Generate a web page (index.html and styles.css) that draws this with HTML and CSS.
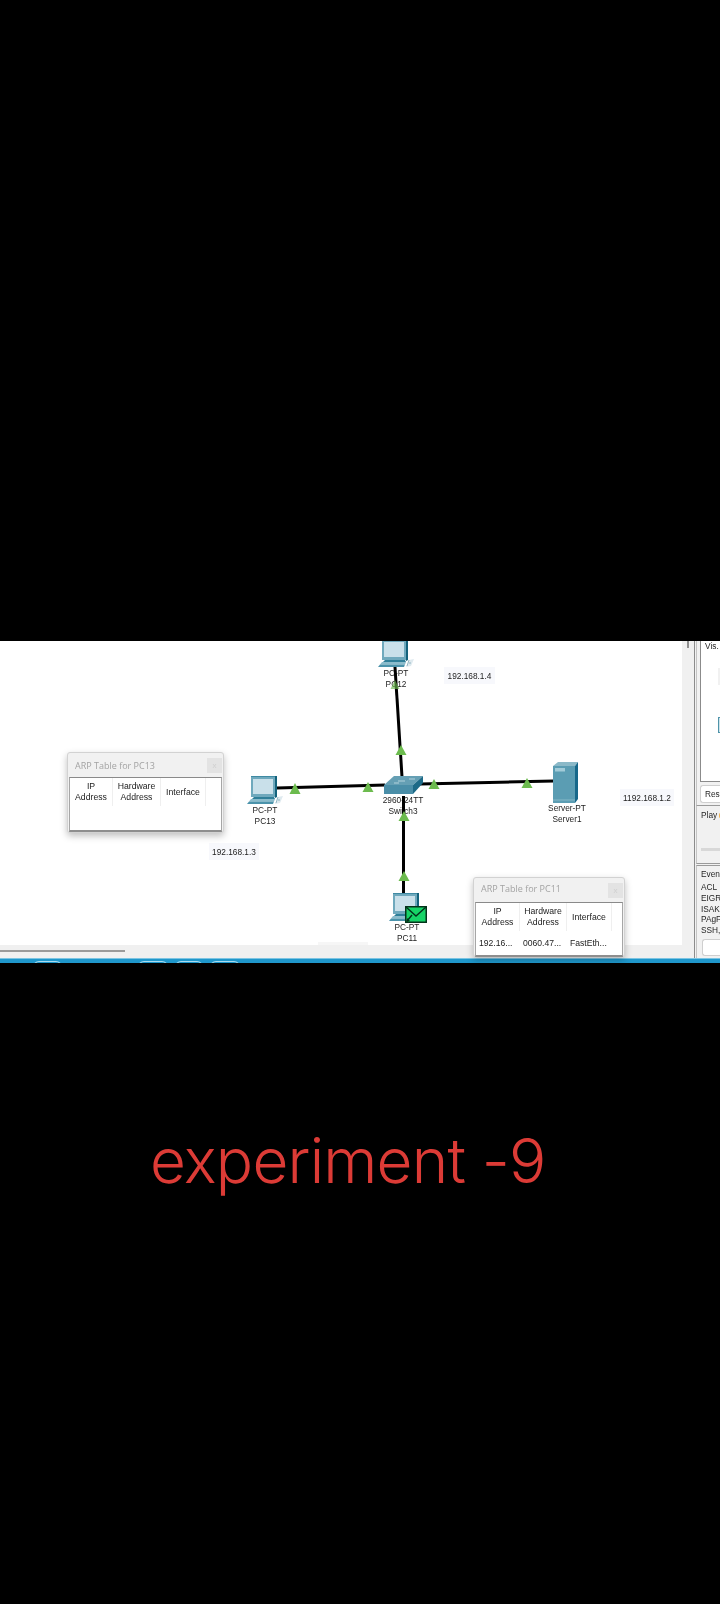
FILE: index.html
```html
<!DOCTYPE html>
<html lang="en">
<head>
<meta charset="utf-8">
<title>experiment -9</title>
<link rel="stylesheet" href="styles.css">
</head>
<body>
<svg class="defs" width="0" height="0" aria-hidden="true">
  <symbol id="pc" viewBox="0 0 36 28">
    <polygon points="4,0 30,0 30,21 4,21" fill="#3f8aa3"/>
    <polygon points="28,0 30,0 30,21 28,22" fill="#14627c"/>
    <polygon points="4,1 28,1 28,21 4,21" fill="#6fa9bd"/>
    <rect x="6" y="3" width="20" height="15" fill="#c9e0ea"/>
    <polygon points="7,21 27,21 28,23 5,23" fill="#2f7f99"/>
    <polygon points="4,23 28,23 27,25.500 2,25.500" fill="#8bbccc"/>
    <polygon points="2,25.500 27,25.500 26,28 0,28" fill="#4b93ab"/>
    <polygon points="31,21 36,20 33,27 28,28" fill="#dfeaef"/>
    <path d="M31 21L29 27M33 24L31 24" stroke="#7fa9b8" stroke-width=".8"/>
  </symbol>
</svg>

<main class="shot">
  <div class="main">
    <section class="workspace">
      <div class="canvas-row">
        <div class="canvas">
          <span class="dev dev-pc12">PC-PT<br>PC12</span>
          <span class="dev dev-pc13">PC-PT<br>PC13</span>
          <span class="dev dev-switch">2960-24TT<br>Switch3</span>
          <span class="dev dev-server">Server-PT<br>Server1</span>
          <span class="dev dev-pc11">PC-PT<br>PC11</span>

          <svg class="links" width="682" height="304" viewBox="0 0 682 304">
            <g stroke="#000" stroke-width="3" fill="none">
              <path d="M395 26L402 136"/>
              <path d="M277 147L385 144"/>
              <path d="M420 143L554 140"/>
              <path d="M403.500 155L403.500 253"/>
            </g>
            <g fill="#6cbb4e">
              <polygon points="295,142 300.500,153 289.500,153"/>
              <polygon points="368,141 373.500,151 362.500,151"/>
              <polygon points="434,138 439.500,148 428.500,148"/>
              <polygon points="527,137 532.500,147 521.500,147"/>
              <polygon points="401,104 406.500,114 395.500,114"/>
              <polygon points="404,170 409.500,180 398.500,180"/>
              <polygon points="404,230 409.500,240 398.500,240"/>
              <polygon points="395,39 399.500,48 390.500,48" opacity=".65"/>
            </g>
          </svg>

          <svg class="node node-pc12" width="36" height="28"><use href="#pc"/></svg>
          <svg class="node node-pc13" width="36" height="28"><use href="#pc"/></svg>
          <svg class="node node-pc11" width="36" height="28"><use href="#pc"/></svg>

          <svg class="node node-switch" width="40" height="19" viewBox="0 0 40 19">
            <polygon points="0,9 10,0 39,0 29,9" fill="#659fb4"/>
            <polygon points="0,9 29,9 29,18 0,18" fill="#4a8ea8"/>
            <polygon points="29,9 39,0 39,7 29,18" fill="#1d6a87"/>
            <path d="M14 5H21M25 3H31M10 7H15" stroke="#c7dfe7" stroke-width=".8"/>
          </svg>

          <svg class="node node-server" width="26" height="41" viewBox="0 0 26 41">
            <polygon points="0,4 5,0 25,0 22,4" fill="#8bb9c8"/>
            <polygon points="0,4 22,4 22,41 0,41" fill="#5b9db3"/>
            <polygon points="22,4 25,0 25,37 22,41" fill="#17688a"/>
            <rect x="2" y="6" width="10" height="3.500" fill="#a2cbd8"/>
            <path d="M0 38H22" stroke="#86b8c7" stroke-width="1"/>
          </svg>

          <svg class="node node-mail" width="22" height="17" viewBox="0 0 22 17">
            <rect x=".75" y=".75" width="20.500" height="15.500" fill="#16d467" stroke="#04331a" stroke-width="1.500"/>
            <path d="M1 1L11 10L21 1M2 15L7 9" fill="none" stroke="#03301a" stroke-width="1.400"/>
            <polygon points="1.500,16 2,12 5,15" fill="#03301a"/>
          </svg>

          <span class="ip ip-4">192.168.1.4</span>
          <span class="ip ip-2">1192.168.1.2</span>
          <span class="ip ip-3">192.168.1.3</span>

          <article class="arp arp-pc13">
            <header class="arp-title"><span>ARP Table for PC13</span><button class="arp-close">x</button></header>
            <div class="arp-body">
              <div class="arp-grid">
                <span class="arp-head">IP<br>Address</span>
                <span class="arp-head">Hardware<br>Address</span>
                <span class="arp-head">Interface</span>
              </div>
            </div>
          </article>

          <article class="arp arp-pc11">
            <header class="arp-title"><span>ARP Table for PC11</span><button class="arp-close">x</button></header>
            <div class="arp-body">
              <div class="arp-grid">
                <span class="arp-head">IP<br>Address</span>
                <span class="arp-head">Hardware<br>Address</span>
                <span class="arp-head">Interface</span>
                <span class="arp-cell">192.16...</span>
                <span class="arp-cell">0060.47...</span>
                <span class="arp-cell">FastEth...</span>
              </div>
            </div>
          </article>

          <div class="notch"></div>
        </div>
        <div class="vgutter"><div class="vthumb"></div></div>
      </div>
      <div class="hstrip"><div class="hthumb"></div></div>
    </section>

    <aside class="side">
      <section class="side-vis">
        <div class="vis-box">
          <span class="side-text">Vis.</span>
          <i class="vis-tile vis-tile-a"></i>
          <i class="vis-tile vis-tile-b"></i>
        </div>
        <div class="side-btn side-text">Res</div>
      </section>
      <section class="side-play">
        <div class="play-head"><span class="side-text">Play</span><i class="play-dot"></i></div>
        <div class="play-slider"></div>
      </section>
      <section class="side-event">
        <span class="side-text">Even</span>
        <ul class="event-list side-text">
          <li>ACL</li>
          <li>EIGR</li>
          <li>ISAK</li>
          <li>PAgP</li>
          <li>SSH,</li>
        </ul>
        <div class="event-btn"></div>
      </section>
    </aside>
  </div>

  <footer class="taskbar">
    <i class="tab tab-a"></i>
    <i class="tab tab-b"></i>
    <i class="tab tab-c"></i>
    <i class="tab tab-d"></i>
  </footer>
</main>

<p class="caption">experiment -9</p>
</body>
</html>
```

FILE: styles.css
```css
* { box-sizing: border-box; }

html, body {
  margin: 0;
  padding: 0;
  background: #000;
}

body {
  width: 720px;
  height: 1604px;
  overflow: hidden;
  padding-top: 641px;
  font-family: "Liberation Sans", Arial, sans-serif;
}

.defs { position: absolute; }

.shot {
  width: 720px;
  height: 322px;
  display: flex;
  flex-direction: column;
  overflow: hidden;
  background: #fff;
  filter: blur(.35px);
}

.main {
  flex: 1;
  min-height: 0;
  display: flex;
}

.workspace {
  width: 694px;
  display: flex;
  flex-direction: column;
}

.canvas-row {
  height: 304px;
  display: flex;
}

.canvas {
  position: relative;
  z-index: 1;
  width: 682px;
  background: #fff;
}

.vgutter {
  flex: 1;
  background: #f0f0f0;
  display: flex;
  justify-content: center;
  padding-right: 1px;
}

.vthumb {
  width: 2px;
  height: 7px;
  background: #8f8f8f;
}

.hstrip {
  flex: 1;
  background: #f0f0f0;
  padding-top: 5px;
}

.hthumb {
  width: 125px;
  height: 2px;
  background: #9a9a9a;
}

.notch {
  position: absolute;
  left: 318px;
  top: 301px;
  width: 50px;
  height: 3px;
  background: #f6f6f6;
}

/* diagram */
.links {
  position: absolute;
  left: 0;
  top: 0;
}

.node { position: absolute; overflow: visible; }
.node-pc12 { left: 378px; top: -2px; }
.node-pc13 { left: 247px; top: 135px; }
.node-pc11 { left: 389px; top: 252px; }
.node-switch { left: 384px; top: 135px; }
.node-server { left: 553px; top: 121px; }
.node-mail { left: 405px; top: 265px; }

.dev {
  position: absolute;
  width: 70px;
  text-align: center;
  font-size: 8.300px;
  line-height: 11px;
  color: #222;
}
.dev-pc12 { left: 361px; top: 27px; }
.dev-pc13 { left: 230px; top: 164px; }
.dev-switch { left: 368px; top: 154px; }
.dev-server { left: 532px; top: 162px; }
.dev-pc11 { left: 372px; top: 281px; }

.ip {
  position: absolute;
  height: 17px;
  padding: 0 3.500px;
  display: flex;
  align-items: center;
  justify-content: center;
  font-size: 8.300px;
  color: #1c1c1c;
  background: #f7f8fc;
}
.ip-4 { left: 444px; top: 26px; width: 51px; }
.ip-2 { left: 620px; top: 148px; width: 54px; }
.ip-3 { left: 209px; top: 202px; width: 50px; }

/* ARP windows */
.arp {
  position: absolute;
  display: flex;
  flex-direction: column;
  background: #f1f1f1;
  border: 1px solid #d2d2d2;
  border-radius: 3px;
  box-shadow: 0 3px 7px rgba(0, 0, 0, .25);
}
.arp-pc13 { left: 67px; top: 111px; width: 157px; height: 81px; }
.arp-pc11 { left: 473px; top: 236px; width: 152px; height: 80px; }
.arp-pc11 .arp-title span { margin-bottom: 3px; }

.arp-title {
  height: 24px;
  flex: none;
  display: flex;
  align-items: center;
  justify-content: space-between;
  padding: 0 1px 0 7px;
  font-family: "Open Sans", sans-serif;
  font-size: 9px;
  color: #a3a3a3;
}

.arp-close {
  width: 15px;
  height: 15px;
  padding: 0;
  border: 0;
  background: #e3e3e3;
  color: #cfcfcf;
  font-size: 8px;
  line-height: 15px;
  font-family: "Liberation Sans", sans-serif;
}

.arp-body {
  flex: 1;
  background: #fff;
  border: 1px solid #a6a6a6;
  border-top-color: #8a8a8a;
  border-bottom-color: #8e8e8e;
  border-width: 1px 1px 2px;
  margin: 0 1px 0 1px;
}

.arp-grid { display: grid; }
.arp-pc13 .arp-grid { grid-template-columns: 43px 48px 45px; grid-template-rows: 28px; }
.arp-pc11 .arp-grid { grid-template-columns: 44px 47px 45px; grid-template-rows: 28px 24px; }

.arp-head {
  display: flex;
  align-items: center;
  justify-content: center;
  text-align: center;
  font-size: 8.700px;
  line-height: 11px;
  color: #222;
  border-right: 1px solid #efefef;
}

.arp-cell {
  display: flex;
  align-items: center;
  padding-left: 3px;
  white-space: nowrap;
  font-size: 8.600px;
  color: #222;
}

/* side panel */
.side {
  flex: 1;
  display: flex;
  flex-direction: column;
  overflow: hidden;
  background: #f1f1f1;
  border-left: 1px solid #8b8b8b;
  padding-left: 1px;
}

.side-text {
  display: block;
  font-size: 8.300px;
  line-height: 11px;
  color: #1f1f1f;
  white-space: nowrap;
}

.side-vis {
  height: 165px;
  flex: none;
  padding-left: 3px;
  border-left: 1px solid #c4c4c4;
  border-bottom: 1px solid #9a9a9a;
}

.vis-box {
  position: relative;
  height: 141px;
  padding: 0 0 0 4px;
  background: #fff;
  border: 1px solid #8b8b8b;
  border-top: 0;
  border-right: 0;
}

.vis-tile {
  position: absolute;
  left: 17px;
  width: 5px;
}
.vis-tile-a { top: 27px; height: 17px; background: #f1f1f1; }
.vis-tile-b { top: 76px; height: 16px; background: #cfe3ea; border: 1px solid #4f94aa; border-right: 0; }

.side-btn {
  height: 18px;
  margin-top: 3px;
  padding-left: 4px;
  display: flex;
  align-items: center;
  background: #fff;
  border: 1px solid #cfcfcf;
  border-right: 0;
  border-radius: 3px 0 0 3px;
}

.side-play {
  height: 58px;
  flex: none;
  padding: 4px 0 0 4px;
  border-left: 1px solid #c4c4c4;
  border-bottom: 1px solid #9a9a9a;
}

.play-head {
  display: flex;
  align-items: center;
  gap: 2px;
}

.play-dot {
  width: 3px;
  height: 5px;
  border-radius: 50%;
  background: #f0b050;
}

.play-slider {
  height: 3px;
  margin-top: 27px;
  background: #d8d8d8;
}

.side-event {
  flex: 1;
  margin-top: 1px;
  padding: 3px 0 0 4px;
  display: flex;
  flex-direction: column;
  border-left: 1px solid #c4c4c4;
  border-top: 1px solid #9a9a9a;
}

.event-list {
  margin: 2px 0 0;
  padding: 0;
  list-style: none;
}

.event-list li { height: 10.800px; }

.event-btn {
  height: 17px;
  margin: 3px 0 0 1px;
  background: #fff;
  border: 1px solid #cfcfcf;
  border-right: 0;
  border-radius: 3px 0 0 3px;
}

/* bottom bar */
.taskbar {
  position: relative;
  height: 5px;
  flex: none;
  background: #1f97cb;
  border-top: 1px solid #7cc4e2;
}

.tab {
  position: absolute;
  top: 2px;
  height: 6px;
  border: 1px solid #a9dcef;
  border-radius: 12px 12px 0 0;
}
.tab-a { left: 33px; width: 29px; }
.tab-b { left: 138px; width: 30px; }
.tab-c { left: 175px; width: 28px; }
.tab-d { left: 210px; width: 30px; }

/* caption */
.caption {
  margin: 0;
  padding-top: 160px;
  padding-left: 150px;
  font-family: Inter, "Liberation Sans", sans-serif;
  font-weight: 300;
  font-size: 62px;
  letter-spacing: -.8px;
  line-height: 75px;
  white-space: nowrap;
  color: #dc3b36;
}
```
